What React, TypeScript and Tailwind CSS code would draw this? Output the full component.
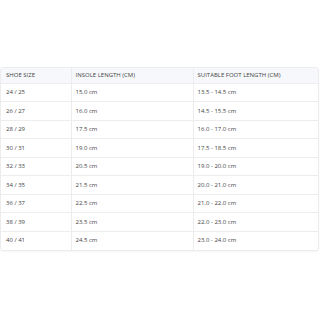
const rows = [
  ["24 / 25", "15.0 cm", "13.5 - 14.5 cm"],
  ["26 / 27", "16.0 cm", "14.5 - 15.5 cm"],
  ["28 / 29", "17.5 cm", "16.0 - 17.0 cm"],
  ["30 / 31", "19.0 cm", "17.5 - 18.5 cm"],
  ["32 / 33", "20.5 cm", "19.0 - 20.0 cm"],
  ["34 / 35", "21.5 cm", "20.0 - 21.0 cm"],
  ["36 / 37", "22.5 cm", "21.0 - 22.0 cm"],
  ["38 / 39", "23.5 cm", "22.0 - 23.0 cm"],
  ["40 / 41", "24.5 cm", "23.0 - 24.0 cm"],
]

export default function App() {
  return (
    <div className="w-[320px] h-[320px] bg-white flex items-center" style={{ fontFamily: '"Open Sans", "Noto Sans", sans-serif' }}>
      <div className="w-[319px] -mt-[2px] rounded-[3px] border border-[#ececec] overflow-hidden shadow-[0_1px_2px_rgba(0,0,0,0.04)]">
        <table className="w-full border-collapse text-[6px] text-[#444]">
          <thead>
            <tr className="bg-[#f6f8fb] h-[15px]">
              <th className="w-[70px] text-left font-normal px-[5px] border-r border-[#ececec]">SHOE SIZE</th>
              <th className="w-[122px] text-left font-normal px-[4px] border-r border-[#ececec]">INSOLE LENGTH (CM)</th>
              <th className="text-left font-normal px-[4px]">SUITABLE FOOT LENGTH (CM)</th>
            </tr>
          </thead>
          <tbody>
            {rows.map((r) => (
              <tr key={r[0]} className="h-[18.5px] border-t border-[#ededed]">
                <td className="px-[5px] border-r border-[#ececec]">{r[0]}</td>
                <td className="px-[4px] border-r border-[#ececec]">{r[1]}</td>
                <td className="px-[4px]">{r[2]}</td>
              </tr>
            ))}
          </tbody>
        </table>
      </div>
    </div>
  )
}
